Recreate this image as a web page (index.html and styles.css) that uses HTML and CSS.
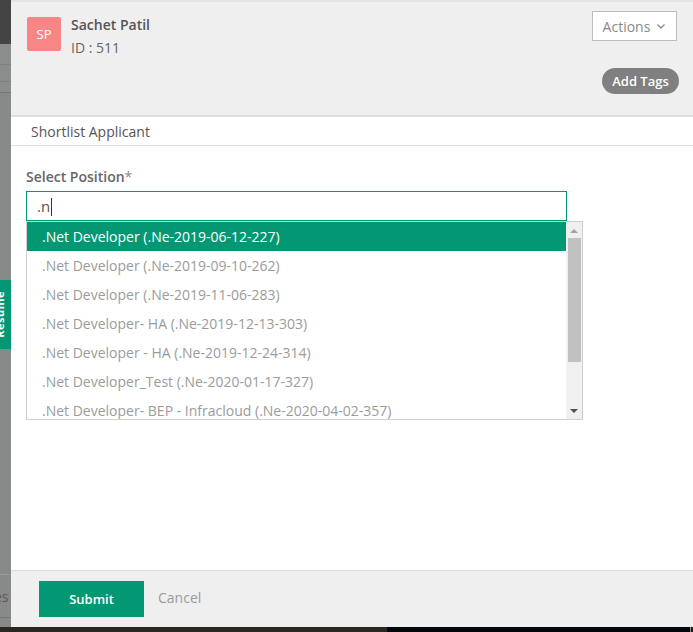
FILE: index.html
```html
<!DOCTYPE html>
<html>
<head>
<meta charset="utf-8">
<link rel="stylesheet" href="styles.css">
</head>
<body>
<div class="screen">
  <div class="main">
    <div class="strip">
      <div class="strip-dark"></div>
      <div class="strip-band"><div class="hl"></div><div class="hl"></div></div>
      <div class="strip-tab"><span>Resume</span></div>
      <div class="strip-fill"></div>
      <div class="strip-foot"><span>es</span></div>
    </div>
    <div class="panel">
      <div class="header">
        <div class="who">
          <div class="avatar">SP</div>
          <div class="info">
            <div class="name">Sachet Patil</div>
            <div class="id">ID : 511</div>
          </div>
        </div>
        <div class="tools">
          <div class="actions">Actions
            <svg width="10" height="7" viewBox="0 0 10 7"><path d="M1.5 1.5 L5 5 L8.5 1.5" fill="none" stroke="#8a8a8a" stroke-width="1.3"/></svg>
          </div>
          <div class="tags">Add Tags</div>
        </div>
      </div>
      <div class="subbar">Shortlist Applicant</div>
      <div class="body">
        <div class="label">Select Position<span class="req">*</span></div>
        <div class="input">.n<span class="caret"></span></div>
        <div class="dropdown">
          <div class="list">
            <div class="item active">.Net Developer (.Ne-2019-06-12-227)</div>
            <div class="item">.Net Developer (.Ne-2019-09-10-262)</div>
            <div class="item">.Net Developer (.Ne-2019-11-06-283)</div>
            <div class="item">.Net Developer- HA (.Ne-2019-12-13-303)</div>
            <div class="item">.Net Developer - HA (.Ne-2019-12-24-314)</div>
            <div class="item">.Net Developer_Test (.Ne-2020-01-17-327)</div>
            <div class="item">.Net Developer- BEP - Infracloud (.Ne-2020-04-02-357)</div>
          </div>
          <div class="scroll">
            <div class="arrow up"></div>
            <div class="thumb"></div>
            <div class="track"></div>
            <div class="arrow down"></div>
          </div>
        </div>
      </div>
      <div class="footer">
        <div class="submit">Submit</div>
        <div class="cancel">Cancel</div>
      </div>
    </div>
  </div>
  <div class="bottombar">
    <div class="bb1"></div><div class="bb2"></div><div class="bb3"></div><div class="bb4"></div>
  </div>
</div>
</body>
</html>
```
FILE: styles.css
```css
html, body { margin: 0; padding: 0; }
body { font-family: "Open Sans", "Liberation Sans", sans-serif; width: 693px; height: 632px; overflow: hidden; background: #fff; }
.screen { display: flex; flex-direction: column; width: 693px; height: 632px; }
.main { display: flex; height: 627px; }

.strip { width: 11px; flex: none; display: flex; flex-direction: column; background: #888989; overflow: hidden; }
.strip-dark { height: 44px; background: #444; flex: none; }
.strip-band { height: 49px; flex: none; background: #8b8c8c; border-bottom: 1px solid #757676; box-sizing: border-box; padding-top: 20px; }
.strip-band .hl { height: 1px; background: #7e7f7f; margin-bottom: 16px; }
.strip-tab { margin-top: 187px; height: 69px; width: 22px; margin-left: -11px; background: #039873; flex: none; display: flex; align-items: center; justify-content: center; }
.strip-tab span { writing-mode: vertical-rl; transform: rotate(180deg); color: #fff; font-size: 11px; font-weight: 700; letter-spacing: 0.5px; margin-left: -2px; }
.strip-fill { flex: 1; }
.strip-foot { height: 44px; flex: none; border-top: 1px solid #9a9a9a; border-bottom: 1px solid #777; box-sizing: border-box; margin-bottom: 9px; overflow: hidden; display: flex; align-items: center; }
.strip-foot span { color: #5a5a5a; font-size: 14px; margin-left: -6px; }

.panel { flex: 1; display: flex; flex-direction: column; border-top: 2px solid #e3e3e3; background: #fff; min-width: 0; }
.header { height: 115px; box-sizing: border-box; background: #efefef; border-bottom: 2px solid #dedede; display: flex; justify-content: space-between; padding: 9px 14px 0 16px; flex: none; }
.who { display: flex; gap: 10px; margin-top: 6px; align-items: flex-start; }
.avatar { width: 34px; height: 34px; background: #f88686; border-radius: 2px; color: #fff; font-size: 13px; display: flex; align-items: center; justify-content: center; }
.info { margin-top: -1px; }
.name { font-size: 14px; font-weight: 600; color: #555; line-height: 18px; }
.id { font-size: 14px; color: #666; line-height: 18px; margin-top: 5px; }
.tools { display: flex; flex-direction: column; align-items: flex-end; }
.actions { width: 85px; height: 30px; box-sizing: border-box; border: 1px solid #bdbdbd; background: #fff; color: #888; font-size: 14px; display: flex; align-items: center; justify-content: center; gap: 6px; margin-right: 2px; }
.tags { margin-top: 27px; height: 26px; width: 77px; border-radius: 13px; background: #808080; color: #fff; font-size: 13px; font-weight: 600; display: flex; align-items: center; justify-content: center; }

.subbar { height: 29px; box-sizing: border-box; border-bottom: 1px solid #e0e0e0; padding-left: 20px; font-size: 14px; color: #555; line-height: 29px; flex: none; }

.body { flex: 1; padding: 21px 0 0 15px; }
.label { font-size: 14px; font-weight: 600; color: #666; line-height: 20px; }
.req { font-weight: 400; color: #888; }
.input { margin-top: 4px; width: 541px; height: 30px; box-sizing: border-box; border: 1px solid #039873; padding-left: 10px; font-size: 15px; color: #555; display: flex; align-items: center; }
.caret { width: 1px; height: 18px; background: #333; margin-left: 1px; margin-top: 2px; }
.dropdown { width: 557px; height: 199px; box-sizing: border-box; border: 1px solid #cfcfcf; display: flex; overflow: hidden; }
.list { flex: 1; overflow: hidden; }
.item { height: 29px; line-height: 29px; padding-left: 15px; font-size: 14px; color: #9b9b9b; white-space: nowrap; }
.item.active { background: #039873; color: #fff; }
.scroll { width: 16px; background: #f0f0f0; display: flex; flex-direction: column; align-items: center; flex: none; }
.arrow { width: 0; height: 0; border-left: 4px solid transparent; border-right: 4px solid transparent; }
.arrow.up { border-bottom: 4px solid #a3a3a3; margin-top: 7px; }
.arrow.down { border-top: 4px solid #505050; margin-bottom: 6px; }
.thumb { width: 13px; height: 124px; background: #c1c1c1; margin-top: 5px; }
.track { flex: 1; }

.footer { height: 57px; box-sizing: border-box; border-top: 1px solid #dcdcdc; background: #efefef; display: flex; align-items: flex-start; padding: 10px 0 0 28px; gap: 14px; flex: none; }
.submit { width: 105px; height: 36px; background: #039873; color: #fff; font-size: 13px; font-weight: 600; display: flex; align-items: center; justify-content: center; }
.cancel { font-size: 14px; color: #9a9a9a; line-height: 36px; margin-top: -1px; }

.bottombar { height: 5px; display: flex; flex: none; }
.bb1 { width: 387px; background: #2b2822; }
.bb2 { width: 303px; background: #04070b; }
.bb3 { width: 1px; background: #8a8a8a; }
.bb4 { flex: 1; background: #1a1a1a; }
```
